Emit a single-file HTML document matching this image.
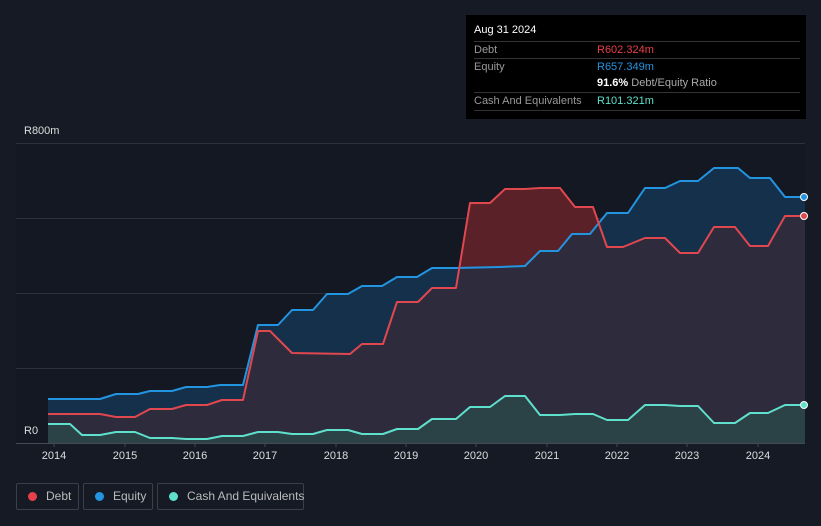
<!DOCTYPE html>
<html><head><meta charset="utf-8"><style>
html,body{margin:0;width:821px;height:526px;overflow:hidden}
body{background:#151a24;font-family:"Liberation Sans",sans-serif;position:relative}
.tt{position:absolute;left:466px;top:15px;width:340px;height:104px;background:#000;color:#fff;font-size:11px}
.tt .r{position:absolute;left:8px;right:6px;height:17px;line-height:17px;border-top:1px solid #333;color:#999}
.tt .v{position:absolute;left:123px}
.lg{position:absolute;top:483px;height:27px;border:1px solid #3a3f48;border-radius:2px;color:#bbb;font-size:12px;line-height:25px;box-sizing:border-box;white-space:nowrap}
.lg i{display:inline-block;width:9px;height:9px;border-radius:50%;margin:0 9px 0 11px;vertical-align:-1px}
.xl{position:absolute;top:450px;color:#ddd;font-size:11px;transform:translateX(-50%)}
</style></head><body>
<svg width="821" height="526" style="position:absolute;left:0;top:0">
<defs>
<clipPath id="eq"><polygon points="48,443 48,399 100,399 116,394 138,394 150,391 172,391 186,387 207,387 220,385 243,385 258,325 278,325 292,310 313,310 327,294 348,294 362,286 382,286 397,277 417,277 432,268 456,268 500,267 525,266 540,251 558,251 572,234 590,234 607,213 628,213 645,188 665,188 680,181 698,181 714,168 738,168 750,178 770,178 785,197 805,197 805,443"/></clipPath>
</defs>
<rect x="16" y="143" width="789" height="300" fill="#131822"/>
<g stroke="#2c323c" stroke-width="1">
<line x1="16" y1="143.5" x2="805" y2="143.5"/><line x1="16" y1="218.5" x2="805" y2="218.5"/><line x1="16" y1="293.5" x2="805" y2="293.5"/><line x1="16" y1="368.5" x2="805" y2="368.5"/><line x1="16" y1="443.5" x2="805" y2="443.5" stroke="#444a54"/>
</g>
<polygon fill="#15304a" points="48,443 48,399 100,399 116,394 138,394 150,391 172,391 186,387 207,387 220,385 243,385 258,325 278,325 292,310 313,310 327,294 348,294 362,286 382,286 397,277 417,277 432,268 456,268 500,267 525,266 540,251 558,251 572,234 590,234 607,213 628,213 645,188 665,188 680,181 698,181 714,168 738,168 750,178 770,178 785,197 805,197 805,443"/>
<polygon fill="#5a2128" points="48,443 48,414 100,414 116,417 135,417 150,409 172,409 186,405 207,405 222,400 243,400 258,331 270,331 292,353 350,354 362,344 383,344 397,302 418,302 432,288 456,288 470,203 490,203 505,189 525,189 540,188 560,188 575,207 593,207 607,247 623,247 645,238 665,238 680,253 698,253 714,227 735,227 750,246 768,246 785,216 805,216 805,443"/>
<polygon clip-path="url(#eq)" fill="#2e2b3d" points="48,443 48,414 100,414 116,417 135,417 150,409 172,409 186,405 207,405 222,400 243,400 258,331 270,331 292,353 350,354 362,344 383,344 397,302 418,302 432,288 456,288 470,203 490,203 505,189 525,189 540,188 560,188 575,207 593,207 607,247 623,247 645,238 665,238 680,253 698,253 714,227 735,227 750,246 768,246 785,216 805,216 805,443"/>
<polygon fill="#2b4246" points="48,443 48,424 70,424 82,435 100,435 116,432 135,432 150,438 172,438 186,439 207,439 222,436 243,436 258,432 278,432 292,434 313,434 327,430 348,430 362,434 383,434 397,429 418,429 432,419 456,419 470,407 490,407 505,396 525,396 540,415 560,415 575,414 593,414 607,420 628,420 645,405 665,405 680,406 698,406 714,423 735,423 750,413 768,413 785,405 805,405 805,443"/>
<g fill="none" stroke-width="2" stroke-linejoin="round">
<polyline stroke="#2394e0" points="48,399 100,399 116,394 138,394 150,391 172,391 186,387 207,387 220,385 243,385 258,325 278,325 292,310 313,310 327,294 348,294 362,286 382,286 397,277 417,277 432,268 456,268 500,267 525,266 540,251 558,251 572,234 590,234 607,213 628,213 645,188 665,188 680,181 698,181 714,168 738,168 750,178 770,178 785,197 805,197"/>
<polyline stroke="#e0474f" points="48,414 100,414 116,417 135,417 150,409 172,409 186,405 207,405 222,400 243,400 258,331 270,331 292,353 350,354 362,344 383,344 397,302 418,302 432,288 456,288 470,203 490,203 505,189 525,189 540,188 560,188 575,207 593,207 607,247 623,247 645,238 665,238 680,253 698,253 714,227 735,227 750,246 768,246 785,216 805,216"/>
<polyline stroke="#5fe0cc" points="48,424 70,424 82,435 100,435 116,432 135,432 150,438 172,438 186,439 207,439 222,436 243,436 258,432 278,432 292,434 313,434 327,430 348,430 362,434 383,434 397,429 418,429 432,419 456,419 470,407 490,407 505,396 525,396 540,415 560,415 575,414 593,414 607,420 628,420 645,405 665,405 680,406 698,406 714,423 735,423 750,413 768,413 785,405 805,405"/>
</g>
<circle cx="804" cy="197" r="3.5" fill="#2394e0" stroke="#fff" stroke-width="1"/>
<circle cx="804" cy="216" r="3.5" fill="#e0474f" stroke="#fff" stroke-width="1"/>
<circle cx="804" cy="405" r="3.5" fill="#5fe0cc" stroke="#fff" stroke-width="1"/>
<g stroke="#444a54"><line x1="54" y1="443" x2="54" y2="447"/><line x1="125" y1="443" x2="125" y2="447"/><line x1="195" y1="443" x2="195" y2="447"/><line x1="265" y1="443" x2="265" y2="447"/><line x1="336" y1="443" x2="336" y2="447"/><line x1="406" y1="443" x2="406" y2="447"/><line x1="476" y1="443" x2="476" y2="447"/><line x1="547" y1="443" x2="547" y2="447"/><line x1="617" y1="443" x2="617" y2="447"/><line x1="687" y1="443" x2="687" y2="447"/><line x1="758" y1="443" x2="758" y2="447"/></g>
</svg>
<div style="position:absolute;left:24px;top:125px;color:#ddd;font-size:11px">R800m</div>
<div style="position:absolute;left:24px;top:425px;color:#ddd;font-size:11px">R0</div>
<div class="xl" style="left:54px">2014</div><div class="xl" style="left:125px">2015</div><div class="xl" style="left:195px">2016</div><div class="xl" style="left:265px">2017</div><div class="xl" style="left:336px">2018</div><div class="xl" style="left:406px">2019</div><div class="xl" style="left:476px">2020</div><div class="xl" style="left:547px">2021</div><div class="xl" style="left:617px">2022</div><div class="xl" style="left:687px">2023</div><div class="xl" style="left:758px">2024</div>
<div class="tt">
<div style="position:absolute;left:8px;top:9px;font-size:11px">Aug 31 2024</div>
<div class="r" style="top:26px">Debt<span class="v" style="color:#e8404a">R602.324m</span></div>
<div class="r" style="top:43px">Equity<span class="v" style="color:#2394e0">R657.349m</span></div>
<div class="r" style="top:60px;border-top:none"><span class="v" style="color:#aaa"><b style="color:#fff">91.6%</b> Debt/Equity Ratio</span></div>
<div class="r" style="top:77px">Cash And Equivalents<span class="v" style="color:#5fe0cc">R101.321m</span></div>
<div style="position:absolute;left:8px;right:6px;top:95px;border-top:1px solid #333"></div>
</div>
<div class="lg" style="left:16px;width:63px"><i style="background:#e8404a"></i>Debt</div>
<div class="lg" style="left:83px;width:70px"><i style="background:#2394e0"></i>Equity</div>
<div class="lg" style="left:157px;width:147px"><i style="background:#5fe0cc"></i>Cash And Equivalents</div>
</body></html>
